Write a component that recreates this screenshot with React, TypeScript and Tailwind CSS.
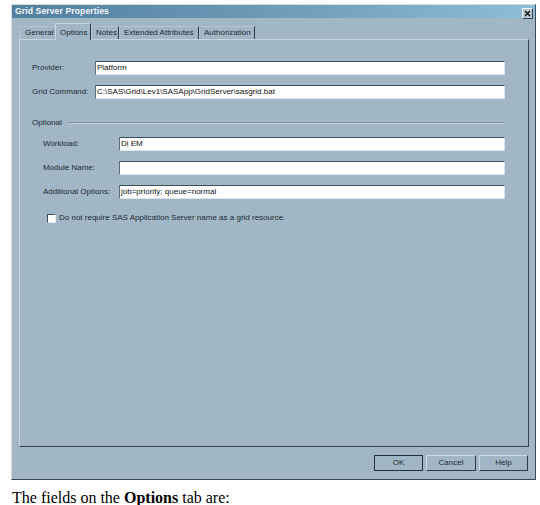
import React from 'react';

const TABS = [
  { label: 'General', w: 'w-[38px]', pl: 'pl-[5px]' },
  { label: 'Options', w: 'w-[36px]', pl: 'pl-[4px]', active: true },
  { label: 'Notes', w: 'w-[28px]', pl: 'pl-[4px]' },
  { label: 'Extended Attributes', w: 'w-[80px]', pl: 'pl-[4px]' },
  { label: 'Authorization', w: 'w-[56px]', pl: 'pl-[4px]' },
];

const Field = ({ label, value, labelW }: { label: string; value?: string; labelW: string }) => (
  <div className="flex items-center h-[14px]">
    <span className={`${labelW} shrink-0`}>{label}</span>
    <div className="flex-1 h-[14px] bg-white border-t border-l border-t-[#3e4e59] border-l-[#5d6e79] border-r border-b border-r-[#dbe4ea] border-b-[#dbe4ea] pl-[1px] flex items-center text-[#111]">
      {value}
    </div>
  </div>
);

const DialogButton = ({ label, w, isDefault }: { label: string; w: string; isDefault?: boolean }) => (
  <button
    className={`${w} h-[16px] flex items-center justify-center bg-[#a1b7c6] border ${
      isDefault
        ? 'border-[#22323d]'
        : 'border-t-[#cfdbe3] border-l-[#cfdbe3] border-r-[#2c3c47] border-b-[#2c3c47]'
    }`}
  >
    {label}
  </button>
);

export default function App() {
  return (
    <div className="w-[540px] h-[505px] bg-white pt-[4px] overflow-hidden font-['Liberation_Sans',Arial,sans-serif] text-[8px] text-[#1c2a33]">
      {/* Dialog window */}
      <div className="ml-[11px] w-[525px] h-[476px] bg-[#a1b7c6] border border-t-[#d5dde2] border-l-[#d5dde2] border-r-[#3b4b56] border-b-[#3b4b56] flex flex-col">
        {/* Title bar */}
        <div className="h-[13px] flex items-center justify-between pl-[3px] pr-[2px] bg-gradient-to-r from-[#52809f] via-[#6f9ab8] to-[#8ebdd9]">
          <span className="font-bold text-[8.6px] text-[#f4f7fa] tracking-[0.1px]">Grid Server Properties</span>
          <div className="w-[11px] h-[11px] mt-[3px] bg-[#b9c7d1] border border-t-[#eef2f5] border-l-[#eef2f5] border-r-[#34444f] border-b-[#34444f] flex items-center justify-center">
            <svg width="7" height="7" viewBox="0 0 7 7">
              <path d="M1 1 L6 6 M6 1 L1 6" stroke="#111" strokeWidth="1.4" />
            </svg>
          </div>
        </div>

        {/* Tab strip */}
        <div className="h-[21px] pl-[7px] flex items-end relative z-10 whitespace-nowrap">
          {TABS.map((t) =>
            t.active ? (
              <div
                key={t.label}
                className={`${t.w} ${t.pl} -ml-[2px] h-[17px] -mb-[1px] pt-[3px] flex items-start bg-[#a1b7c6] border-t border-l border-t-[#c9d6df] border-l-[#c9d6df] border-r border-r-[#2a3a45]`}
              >
                {t.label}
              </div>
            ) : (
              <div
                key={t.label}
                className={`${t.w} ${t.pl} h-[13px] flex items-center border-t border-l border-t-[#b5c6d2] border-l-[#b5c6d2] border-r border-r-[#2a3a45] first:border-r-0`}
              >
                {t.label}
              </div>
            )
          )}
        </div>

        {/* Tab page */}
        <div className="ml-[7px] w-[510px] h-[408px] border border-t-[#c6d4de] border-l-[#c6d4de] border-r-[#34444f] border-b-[#34444f] pt-[21px] pl-[12px] pr-[23px]">
          <div className="flex flex-col gap-[10px]">
            <Field label="Provider:" value="Platform" labelW="w-[63px]" />
            <Field label="Grid Command:" value="C:\SAS\Grid\Lev1\SASApp\GridServer\sasgrid.bat" labelW="w-[63px]" />
          </div>

          {/* Optional group */}
          <div className="mt-[19px] flex items-center h-[10px]">
            <span>Optional</span>
            <div className="flex-1 ml-[6px] h-[2px] border-t border-t-[#7d93a2] border-b border-b-[#c3d1db]" />
          </div>

          <div className="mt-[9px] pl-[11px] flex flex-col gap-[10px]">
            <Field label="Workload:" value="Di EM" labelW="w-[76px]" />
            <Field label="Module Name:" labelW="w-[76px]" />
            <Field label="Additional Options:" value="job=priority; queue=normal" labelW="w-[76px]" />
          </div>

          <div className="mt-[13px] pl-[15px] flex items-center gap-[3px]">
            <div className="w-[9px] h-[9px] bg-white border-t border-l border-t-[#3e4e59] border-l-[#3e4e59] border-r border-b border-r-[#e6edf1] border-b-[#e6edf1]" />
            <span>Do not require SAS Application Server name as a grid resource.</span>
          </div>
        </div>

        {/* Buttons */}
        <div className="mt-[8px] pr-[7px] flex justify-end gap-[3px]">
          <DialogButton label="OK" w="w-[49px]" isDefault />
          <DialogButton label="Cancel" w="w-[50px]" />
          <DialogButton label="Help" w="w-[49px]" />
        </div>
      </div>

      <p className="mt-[10px] ml-[12px] font-['Liberation_Serif','Times_New_Roman',serif] text-[16px] leading-none text-black">
        The fields on the <b>Options</b> tab are:
      </p>
    </div>
  );
}
